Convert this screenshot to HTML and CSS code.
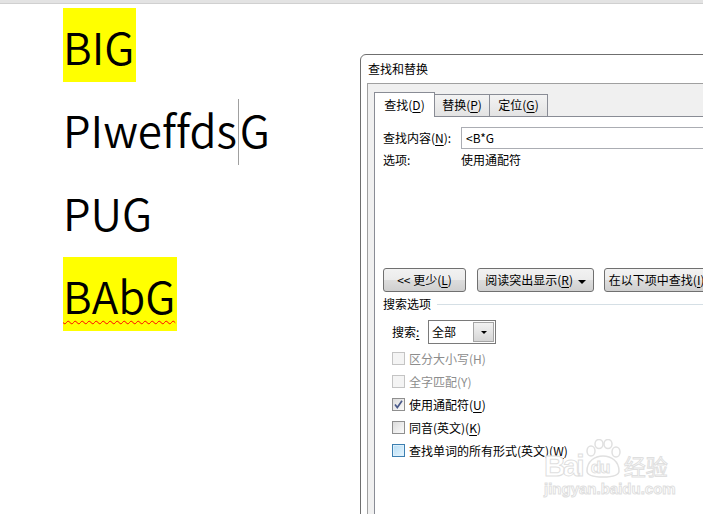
FILE: index.html
```html
<!DOCTYPE html>
<html lang="zh-CN">
<head>
    <meta charset="UTF-8">
    <meta name="viewport" content="width=device-width, initial-scale=1.0">
    <title>查找和替换</title>
    <link rel="stylesheet" href="styles.css">
</head>
<body>
    <div class="topbar"></div>

    <!-- document text behind the dialog -->
    <div class="doc">
        <p class="line"><span class="mark">BIG</span></p>
        <p class="line">PIweffds<span class="caret"></span>G</p>
        <p class="line">PUG</p>
        <p class="line"><span class="mark typo">BAbG</span></p>
    </div>

    <div class="dialog">
        <div class="dialog-title">查找和替换</div>
        <div class="dialog-frame">
            <div class="tabs">
                <div class="tab active">查找(<u>D</u>)</div>
                <div class="tab tab-replace">替换(<u>P</u>)</div>
                <div class="tab tab-goto">定位(<u>G</u>)</div>
            </div>
            <div class="panel">
                <div class="field-row">
                    <span class="field-label">查找内容(<u>N</u>):</span>
                    <div class="textbox">&lt;B*G</div>
                </div>
                <div class="options-row">
                    <span class="field-label">选项:</span>
                    <span>使用通配符</span>
                </div>

                <div class="buttons">
                    <div class="btn btn-less">&lt;&lt; 更少(<u>L</u>)</div>
                    <div class="btn btn-read">阅读突出显示(<u>R</u>) <span class="arrow"></span></div>
                    <div class="btn btn-find">在以下项中查找(<u>I</u>) <span class="arrow"></span></div>
                </div>

                <div class="group-title"><span>搜索选项</span></div>

                <div class="search-row">
                    <span class="search-label">搜索<u>:</u></span>
                    <div class="combo">
                        <span class="combo-text">全部</span>
                        <span class="combo-btn"><span class="arrow"></span></span>
                    </div>
                </div>

                <ul class="checks">
                    <li class="disabled"><span class="box"></span>区分大小写(H)</li>
                    <li class="disabled"><span class="box"></span>全字匹配(Y)</li>
                    <li><span class="box checked"><svg width="11" height="11" viewBox="0 0 11 11"><path d="M2 5.5 L4.3 8.5 L9 1.8" fill="none" stroke="#4a5a8a" stroke-width="1.7"/></svg></span>使用通配符(<u>U</u>)</li>
                    <li><span class="box"></span>同音(英文)(<u>K</u>)</li>
                    <li><span class="box hover"></span>查找单词的所有形式(英文)(<u>W</u>)</li>
                </ul>
            </div>
        </div>
    </div>

    <!-- faint site watermark over the screenshot -->
    <div class="watermark">
        <div class="wm-top">
            <span class="wm-bai">Bai</span>
            <span class="wm-paw">
                <svg width="36" height="39" viewBox="0 0 36 39">
                    <ellipse cx="6" cy="12" rx="4" ry="5" fill="none" stroke="#e0e0e0" stroke-width="1.5"/>
                    <ellipse cx="14" cy="5" rx="4" ry="4.5" fill="none" stroke="#e0e0e0" stroke-width="1.5"/>
                    <ellipse cx="23" cy="5" rx="4" ry="4.5" fill="none" stroke="#e0e0e0" stroke-width="1.5"/>
                    <ellipse cx="31" cy="13" rx="4" ry="5" fill="none" stroke="#e0e0e0" stroke-width="1.5"/>
                    <path d="M2 32 C2 22 10 17 18 17 C26 17 34 22 34 32 C34 37 27 38 18 38 C9 38 2 37 2 32 Z" fill="none" stroke="#e0e0e0" stroke-width="1.5"/>
                </svg>
                <span class="wm-du">du</span>
            </span>
            <span class="wm-jy">经验</span>
        </div>
        <div class="wm-url">jingyan.baidu.com</div>
    </div>
</body>
</html>
```

FILE: styles.css
```css
* {
    box-sizing: border-box;
}

html, body {
    margin: 0;
    height: 100%;
}

body {
    position: relative;
    overflow: hidden;
    background: #ffffff;
    font-family: "Noto Sans CJK SC", sans-serif;
    color: #000;
}

u {
    text-decoration: underline;
    text-underline-offset: 2px;
}

.topbar {
    height: 4px;
    background: #e3e3e3;
    border-bottom: 1px solid #d0d0d0;
}

/* document */

.doc {
    padding: 4px 0 0 63px;
}

.line {
    margin: 0 0 9px;
    height: 74px;
    line-height: 76px;
    font-size: 44px;
    font-weight: 350;
    font-family: "Noto Sans CJK SC", sans-serif;
    font-variant-ligatures: none;
    white-space: nowrap;
}

.mark {
    display: inline-block;
    height: 74px;
    padding-right: 2px;
    vertical-align: top;
    background: #ffff00;
}

.caret {
    display: inline-block;
    width: 0;
    height: 66px;
    margin: 0 1px;
    border-left: 1px solid #a0a0a0;
    vertical-align: -17px;
}

.typo {
    text-decoration: underline wavy #ff0000;
    text-decoration-thickness: 1px;
    text-underline-offset: 6px;
}

/* dialog */

.dialog {
    position: absolute;
    left: 360px;
    top: 54px;
    width: 420px;
    height: 500px;
    background: #ffffff;
    border: 1px solid #6f6f6f;
    border-radius: 6px 0 0 0;
    font-size: 12px;
    line-height: 1;
}

.dialog-title {
    height: 28px;
    line-height: 27px;
    padding-left: 7px;
}

.dialog-frame {
    margin-left: 6px;
    height: 100%;
    padding: 8px 0 0 6px;
    background: #f0f0f0;
    border-top: 1px solid #a0a0a0;
    border-left: 1px solid #a0a0a0;
}

.tabs {
    display: flex;
    align-items: flex-end;
    height: 24px;
}

.tab {
    position: relative;
    height: 22px;
    line-height: 20px;
    text-align: center;
    margin-left: -1px;
    border: 1px solid #898c95;
    border-bottom: none;
    background: linear-gradient(#f3f3f3, #e3e3e3);
}

.tab.active {
    z-index: 1;
    width: 61px;
    height: 25px;
    margin-left: 0;
    margin-bottom: -1px;
    line-height: 23px;
    background: #ffffff;
}

.tab-replace {
    width: 56px;
}

.tab-goto {
    width: 59px;
}

.panel {
    height: 100%;
    padding: 10px 0 0 8px;
    background: #ffffff;
    border-top: 1px solid #898c95;
    border-left: 1px solid #898c95;
}

.field-row {
    display: flex;
    height: 22px;
    line-height: 22px;
}

.field-label {
    width: 78px;
    flex-shrink: 0;
}

.textbox {
    flex: 1;
    height: 22px;
    line-height: 20px;
    padding-left: 4px;
    border: 1px solid #abadb3;
}

.options-row {
    display: flex;
    height: 20px;
    line-height: 20px;
    margin-top: 1px;
}

.buttons {
    display: flex;
    margin-top: 98px;
}

.btn {
    flex-shrink: 0;
    height: 24px;
    line-height: 22px;
    text-align: center;
    white-space: nowrap;
    border: 1px solid #707070;
    border-radius: 3px;
    background: linear-gradient(#f2f2f2 0%, #ebebeb 50%, #dddddd 51%, #cfcfcf 100%);
}

.btn-less {
    width: 83px;
}

.btn-read {
    width: 117px;
    margin-left: 11px;
}

.btn-find {
    width: 118px;
    margin-left: 10px;
}

.arrow {
    display: inline-block;
    width: 0;
    height: 0;
    margin-left: 2px;
    vertical-align: middle;
    border-left: 4px solid transparent;
    border-right: 4px solid transparent;
    border-top: 4px solid #000;
}

.group-title {
    display: flex;
    align-items: center;
    height: 16px;
    margin-top: 4px;
}

.group-title::after {
    content: "";
    flex: 1;
    height: 1px;
    margin-left: 6px;
    background: #d5dfe5;
}

.search-row {
    display: flex;
    align-items: center;
    margin-top: 8px;
    padding-left: 9px;
}

.search-label {
    width: 36px;
}

.combo {
    display: flex;
    width: 68px;
    height: 24px;
    border: 1px solid #7a7a7a;
}

.combo-text {
    flex: 1;
    padding-left: 3px;
    line-height: 22px;
}

.combo-btn {
    width: 21px;
    margin: 1px;
    display: flex;
    align-items: center;
    justify-content: center;
    border: 1px solid #a5a5a5;
    background: linear-gradient(#f2f2f2, #d6d6d6);
}

.combo-btn .arrow {
    margin: 0;
    border-left-width: 3px;
    border-right-width: 3px;
    border-top-width: 3px;
}

.checks {
    list-style: none;
    margin: 3px 0 0;
    padding: 0 0 0 9px;
}

.checks li {
    display: flex;
    align-items: center;
    height: 23px;
}

.checks li.disabled {
    color: #8d8d8d;
}

.box {
    display: flex;
    align-items: center;
    justify-content: center;
    width: 13px;
    height: 13px;
    margin-right: 4px;
    border: 1px solid #8f8f8f;
    background: linear-gradient(135deg, #dcdcdc, #fbfbfb);
}

.disabled .box {
    border-color: #c4c4c4;
    background: #f4f4f4;
}

.box.hover {
    border-color: #3c7fb1;
    background: linear-gradient(135deg, #b5dcf5, #e6f5fd);
    box-shadow: inset 0 0 0 1px #def0fb;
}

/* watermark */

.watermark {
    position: absolute;
    left: 544px;
    top: 439px;
    color: #ffffff;
    font-family: "Liberation Sans", sans-serif;
    font-weight: bold;
    -webkit-text-stroke: 1px #dfdfdf;
}

.wm-top {
    display: flex;
    align-items: flex-end;
    height: 39px;
}

.wm-bai {
    font-size: 30px;
    line-height: 24px;
    letter-spacing: -3px;
}

.wm-paw {
    position: relative;
    width: 36px;
    height: 39px;
    margin-left: 3px;
}

.wm-paw svg {
    display: block;
}

.wm-du {
    position: absolute;
    left: 6px;
    bottom: 2px;
    font-size: 17px;
    line-height: 17px;
    letter-spacing: -1px;
}

.wm-jy {
    margin-left: 3px;
    font-family: "Noto Sans CJK SC", sans-serif;
    font-weight: normal;
    font-size: 22px;
    line-height: 26px;
}

.wm-url {
    margin-top: 2px;
    font-size: 15px;
    line-height: 18px;
}
```
